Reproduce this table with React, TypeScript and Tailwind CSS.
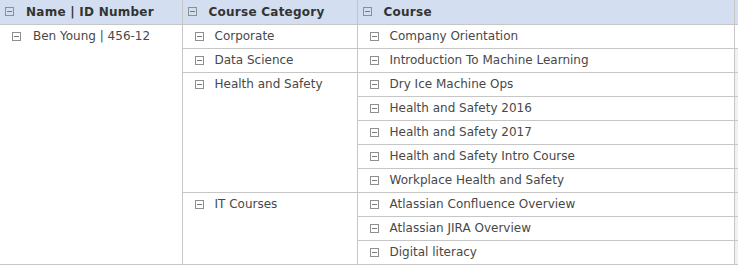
import React from "react";

function MinusBox() {
  return (
    <svg width="9" height="9" viewBox="0 0 9 9" className="shrink-0 block">
      <rect x="0.5" y="0.5" width="8" height="8" fill="none" stroke="#8f8f8f" />
      <line x1="2" y1="4.5" x2="7" y2="4.5" stroke="#7a7a7a" />
    </svg>
  );
}

function Head({ label }: { label: string }) {
  return (
    <th className="h-[24px] p-0 border-b border-r border-[#c6c6c6] bg-[#d3dff0] text-left align-middle font-bold">
      <div className="flex items-center gap-[12px] pl-[5px] text-[#333] tracking-[0.25px]">
        <MinusBox />
        <span>{label}</span>
      </div>
    </th>
  );
}

function Cell({ label, rowSpan }: { label: string; rowSpan?: number }) {
  return (
    <td rowSpan={rowSpan} className="h-[24px] p-0 border-r border-b border-[#c6c6c6] align-top">
      <div className="flex h-[23px] items-center gap-[11px] pl-[12px] text-[#484848]">
        <MinusBox />
        <span>{label}</span>
      </div>
    </td>
  );
}

const rows: { cat?: [string, number]; course: string }[] = [
  { cat: ["Corporate", 1], course: "Company Orientation" },
  { cat: ["Data Science", 1], course: "Introduction To Machine Learning" },
  { cat: ["Health and Safety", 5], course: "Dry Ice Machine Ops" },
  { course: "Health and Safety 2016" },
  { course: "Health and Safety 2017" },
  { course: "Health and Safety Intro Course" },
  { course: "Workplace Health and Safety" },
  { cat: ["IT Courses", 3], course: "Atlassian Confluence Overview" },
  { course: "Atlassian JIRA Overview" },
  { course: "Digital literacy" },
];

export default function App() {
  return (
    <div
      className="w-[738px] h-[266px] bg-white overflow-hidden text-[12px]"
      style={{ fontFamily: '"DejaVu Sans", Verdana, sans-serif' }}
    >
      <table className="border-collapse table-fixed w-[738px] border-b border-[#c6c6c6]">
        <colgroup>
          <col style={{ width: 182 }} />
          <col style={{ width: 175 }} />
          <col style={{ width: 377 }} />
          <col style={{ width: 4 }} />
        </colgroup>
        <thead>
          <tr>
            <Head label="Name | ID Number" />
            <Head label="Course Category" />
            <Head label="Course" />
            <th className="p-0 bg-[#d3dff0] border-b border-[#c6c6c6]"></th>
          </tr>
        </thead>
        <tbody>
          {rows.map((r, i) => (
            <tr key={i}>
              {i === 0 && (
                <td rowSpan={10} className="p-0 border-r border-[#c6c6c6] align-top">
                  <div className="flex h-[23px] items-center gap-[12px] pl-[12px] text-[#484848]">
                    <MinusBox />
                    <span>Ben Young | 456-12</span>
                  </div>
                </td>
              )}
              {r.cat && <Cell label={r.cat[0]} rowSpan={r.cat[1]} />}
              <Cell label={r.course} />
              <td className={`p-0 border-b border-[#c6c6c6] ${i === 0 ? "bg-white" : "bg-[#f1f1f1]"}`}></td>
            </tr>
          ))}
        </tbody>
      </table>
    </div>
  );
}
